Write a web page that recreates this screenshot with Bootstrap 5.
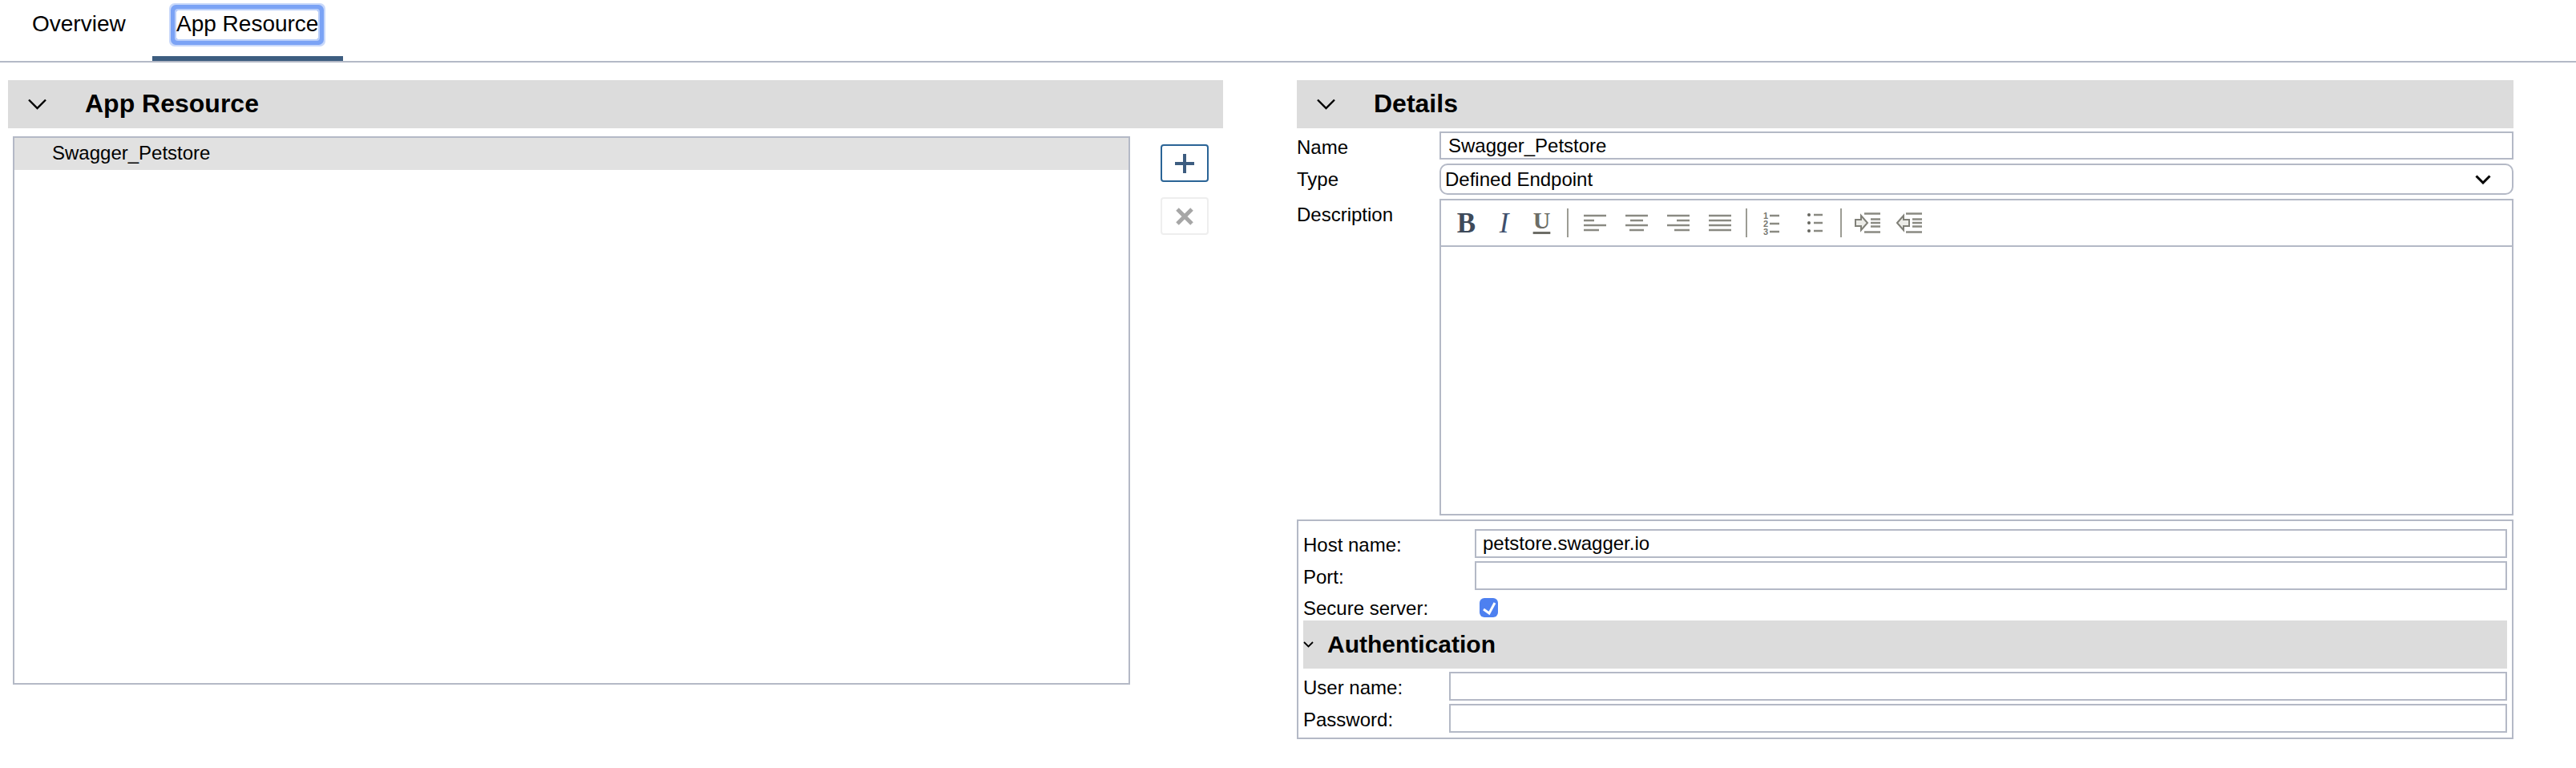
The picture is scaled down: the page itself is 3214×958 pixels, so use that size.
<!DOCTYPE html>
<html lang="en">
<head>
  <meta charset="UTF-8" />
  <meta name="viewport" content="width=device-width, initial-scale=1" />
  <title>App Resource</title>
  <link href="https://cdn.jsdelivr.net/npm/bootstrap@5.3.0/dist/css/bootstrap.min.css" rel="stylesheet" />
  <style>
    body { font-family: "Liberation Sans", Arial, sans-serif; font-size: 24px; color: #000; background: #fff; overflow: hidden; }

    /* tabs */
    .tab-bar { height: 78px; border-bottom: 2px solid #b4b9c6; flex-wrap: nowrap; }
    .tab-bar .nav-link { display: flex; align-items: flex-start; color: #000; font-size: 28px; height: 76px; padding: 0; border: 0; background: none; text-align: left; }
    .tab-first { width: 190px; padding-left: 40px !important; line-height: 60px; }
    .tab-open { width: 238px; padding-left: 30px !important; border-bottom: 6px solid #3d5d80 !important; }
    .tab-focus { display: block; width: 177px; height: 36px; margin-top: 13px; line-height: 34px; white-space: nowrap; border-radius: 2px;
      box-shadow: 0 0 0 2px #b9cefa, 0 0 0 7px #7ba3f5, 0 0 0 9px #c8d8fa; }

    /* page columns */
    .page-main { padding: 22px 78px 0 10px; gap: 92px; }
    .left-col { width: 1516px; }
    .right-col { width: 1518px; }
    .sec-head { height: 60px; background: #dcdcdc; padding-left: 25px; gap: 48px; font-size: 32px; font-weight: 700; }
    .head-title { margin-bottom: 2px; }

    /* resource list */
    .res-list { width: 1394px; height: 684px; margin: 10px 0 0 6px; border: 2px solid #b4b9c6; display: block; }
    .res-list .list-group-item { height: 40px; line-height: 37px; padding: 0 0 0 47px; border: 0; border-radius: 0; background: #e1e1e1; color: #000; }
    .res-btns { margin: 20px 0 0 38px; gap: 19px; }
    .res-btn { width: 60px; height: 47px; padding: 0; background: #fff; border: 2px solid #2a6496; border-radius: 4px; }
    .res-btn:disabled { border-color: #eeeeee; opacity: 1; background: #fff; }

    /* form fields */
    .field-label { flex: 0 0 auto; height: 35px; line-height: 36px; padding-top: 2px; }
    .secure-label { padding-top: 5px; }
    .w-main { width: 178px; }
    .w-host { width: 214px; }
    .w-auth { width: 182px; }
    .form-control.field-box, .form-select.field-box { height: 36px; min-height: 0; padding: 0 8px; font-size: 24px; color: #000; border: 2px solid #b4b9c6; border-radius: 0; box-shadow: none; }
    .form-select.field-box { height: 39px; padding: 0 5px; border-radius: 10px;
      background-image: url("data:image/svg+xml,%3csvg xmlns='http://www.w3.org/2000/svg' viewBox='0 0 20 12'%3e%3cpath fill='none' stroke='%23000' stroke-width='3' d='M1.5 1.5 10 10l8.5-8.5'/%3e%3c/svg%3e");
      background-position: right 26px center; background-size: 20px 12px; }
    .form-control.name-box { height: 35px; padding-left: 9px; }

    /* description editor */
    .desc-box { height: 395px; border: 2px solid #b4b9c6; }
    .desc-tools { height: 58px; padding-left: 8px; border-bottom: 2px solid #b4b9c6; }
    .tool { flex: 0 0 auto; height: 56px; padding: 0; border: 0; background: none; display: flex; align-items: center; justify-content: center; }
    .tool-47 { width: 47px; }
    .tool-52 { width: 52px; }
    .tool-54 { width: 54px; }
    .tool-txt { font-family: "Liberation Serif", serif; font-size: 35px; line-height: 1; }
    .tool-bold { font-weight: 700; color: #3e4a5a; }
    .tool-ital { font-style: italic; color: #3e4f6c; }
    .tool-und { font-size: 30px; font-weight: 700; text-decoration: underline; text-decoration-thickness: 3px; text-underline-offset: 4px; color: #6d6d66; padding-bottom: 7px; }
    .tool-sep { flex: 0 0 auto; width: 2px; height: 36px; margin-top: 10px; background: #9c9c94; }
    .sep-a { margin-left: 8px; margin-right: 7px; }
    .sep-b { margin-left: 6px; margin-right: 3px; }
    .sep-c { margin-left: 5px; margin-right: 6px; }
    .desc-body { min-height: 0; }

    /* host panel */
    .host-panel { height: 274px; margin-top: 5px; padding: 10px 6px 6px; border: 2px solid #b4b9c6; }
    .secure-row { height: 38px; }
    .form-check-input.secure-box { width: 23px; height: 24px; margin: 10px 0 0 6px; border: 0; border-radius: 6px; box-shadow: none; background-size: 23px 24px;
      background-color: #4d80f0;
      background-image: url("data:image/svg+xml,%3csvg xmlns='http://www.w3.org/2000/svg' viewBox='0 0 23 24'%3e%3cpath fill='none' stroke='%23fff' stroke-width='3' d='M5 14l7 5 7-13'/%3e%3c/svg%3e"); }
    .auth-head { height: 60px; background: #dcdcdc; gap: 17px; font-size: 30px; font-weight: 700; }
  </style>
</head>
<body>
  <ul class="nav tab-bar">
    <li class="nav-item"><button class="nav-link tab-first" type="button">Overview</button></li>
    <li class="nav-item"><button class="nav-link tab-open" type="button"><span class="tab-focus">App Resource</span></button></li>
  </ul>

  <div class="d-flex page-main">
    <!-- left: resource list -->
    <section class="left-col">
      <div class="sec-head d-flex align-items-center">
        <svg width="23" height="14" viewBox="0 0 23 14"><path d="M1 1.5 11.5 12 22 1.5" fill="none" stroke="#000" stroke-width="2.4"/></svg>
        <span class="head-title">App Resource</span>
      </div>
      <div class="d-flex">
        <div class="list-group rounded-0 res-list">
          <a class="list-group-item">Swagger_Petstore</a>
        </div>
        <div class="d-flex flex-column res-btns">
          <button class="btn res-btn d-flex align-items-center justify-content-center" type="button" aria-label="Add">
            <svg width="24" height="24" viewBox="0 0 24 24"><path d="M0 12h24M12 0v24" stroke="#3d5d80" stroke-width="4"/></svg>
          </button>
          <button class="btn res-btn d-flex align-items-center justify-content-center" type="button" aria-label="Remove" disabled>
            <svg width="22" height="22" viewBox="0 0 22 22"><path d="M2 2l18 18M20 2 2 20" stroke="#a6a6a6" stroke-width="5"/></svg>
          </button>
        </div>
      </div>
    </section>

    <!-- right: details -->
    <section class="right-col">
      <div class="sec-head d-flex align-items-center">
        <svg width="23" height="14" viewBox="0 0 23 14"><path d="M1 1.5 11.5 12 22 1.5" fill="none" stroke="#000" stroke-width="2.4"/></svg>
        <span class="head-title">Details</span>
      </div>

      <div class="d-flex mt-1">
        <label class="field-label w-main">Name</label>
        <input class="form-control field-box name-box" type="text" value="Swagger_Petstore">
      </div>
      <div class="d-flex" style="margin-top:5px">
        <label class="field-label w-main">Type</label>
        <select class="form-select field-box">
          <option>Defined Endpoint</option>
        </select>
      </div>
      <div class="d-flex" style="margin-top:5px">
        <label class="field-label w-main">Description</label>
        <div class="desc-box flex-grow-1 d-flex flex-column">
          <div class="desc-tools d-flex">
            <button class="tool tool-47 tool-txt tool-bold" type="button">B</button>
            <button class="tool tool-47 tool-txt tool-ital" type="button">I</button>
            <button class="tool tool-47 tool-txt tool-und" type="button">U</button>
            <span class="tool-sep sep-a"></span>
            <button class="tool tool-52" type="button" aria-label="Align left">
              <svg width="28" height="22" viewBox="0 0 28 22"><path d="M0 2h28M0 8h13M0 14h28M0 20h19" stroke="#8a8a82" stroke-width="2.6"/></svg>
            </button>
            <button class="tool tool-52" type="button" aria-label="Align center">
              <svg width="28" height="22" viewBox="0 0 28 22"><path d="M0 2h28M6 8h16M0 14h28M5 20h18" stroke="#8a8a82" stroke-width="2.6"/></svg>
            </button>
            <button class="tool tool-52" type="button" aria-label="Align right">
              <svg width="28" height="22" viewBox="0 0 28 22"><path d="M0 2h28M12 8h16M0 14h28M9 20h19" stroke="#8a8a82" stroke-width="2.6"/></svg>
            </button>
            <button class="tool tool-52" type="button" aria-label="Justify">
              <svg width="28" height="22" viewBox="0 0 28 22"><path d="M0 2h28M0 8h28M0 14h28M0 20h28" stroke="#8a8a82" stroke-width="2.6"/></svg>
            </button>
            <span class="tool-sep sep-b"></span>
            <button class="tool tool-54" type="button" aria-label="Numbered list">
              <svg width="20" height="36" viewBox="0 0 20 36">
                <g font-family="Liberation Sans, sans-serif" font-size="11" font-weight="700" fill="#77776f"><text x="0" y="13">1</text><text x="0" y="23">2</text><text x="0" y="33">3</text></g>
                <path d="M8 9h12M8 19h12M8 29h12" stroke="#8a8a82" stroke-width="2.6"/>
              </svg>
            </button>
            <button class="tool tool-54" type="button" aria-label="Bullet list">
              <svg width="19" height="26" viewBox="0 0 19 26"><path d="M8 3h11M8 13h11M8 23h11" stroke="#8a8a82" stroke-width="2.6"/><circle cx="2" cy="3" r="2" fill="#66665f"/><circle cx="2" cy="13" r="2" fill="#66665f"/><circle cx="2" cy="23" r="2" fill="#66665f"/></svg>
            </button>
            <span class="tool-sep sep-c"></span>
            <button class="tool tool-52" type="button" aria-label="Indent">
              <svg width="32" height="26" viewBox="0 0 32 26"><path d="M12 1.500h20M12 24.500h20M20 8.500h12M20 13h12M20 17.500h12" stroke="#8a8a82" stroke-width="2.400"/><path d="M1 9h7V4l8 9-8 9v-5H1z" fill="#ecece8" stroke="#808078" stroke-width="2"/></svg>
            </button>
            <button class="tool tool-52" type="button" aria-label="Outdent">
              <svg width="32" height="26" viewBox="0 0 32 26"><path d="M12 1.500h20M12 24.500h20M20 8.500h12M20 13h12M20 17.500h12" stroke="#8a8a82" stroke-width="2.400"/><path d="M16 9H9V4l-8 9 8 9v-5h7z" fill="#ecece8" stroke="#808078" stroke-width="2"/></svg>
            </button>
          </div>
          <div class="desc-body flex-grow-1"></div>
        </div>
      </div>

      <div class="host-panel">
        <div class="d-flex">
          <label class="field-label w-host">Host name:</label>
          <input class="form-control field-box" type="text" value="petstore.swagger.io">
        </div>
        <div class="d-flex mt-1">
          <label class="field-label w-host">Port:</label>
          <input class="form-control field-box" type="text">
        </div>
        <div class="d-flex secure-row">
          <label class="field-label w-host secure-label">Secure server:</label>
          <input class="form-check-input secure-box" type="checkbox" checked>
        </div>
        <div class="auth-head d-flex align-items-center">
          <svg width="13" height="8" viewBox="0 0 13 8"><path d="M1 1l5.500 5.500L12 1" fill="none" stroke="#000" stroke-width="1.800"/></svg>
          <span class="head-title">Authentication</span>
        </div>
        <div class="d-flex mt-1">
          <label class="field-label w-auth">User name:</label>
          <input class="form-control field-box" type="text">
        </div>
        <div class="d-flex mt-1">
          <label class="field-label w-auth">Password:</label>
          <input class="form-control field-box" type="password">
        </div>
      </div>
    </section>
  </div>

  <script src="https://cdn.jsdelivr.net/npm/bootstrap@5.3.0/dist/js/bootstrap.bundle.min.js"></script>
</body>
</html>
